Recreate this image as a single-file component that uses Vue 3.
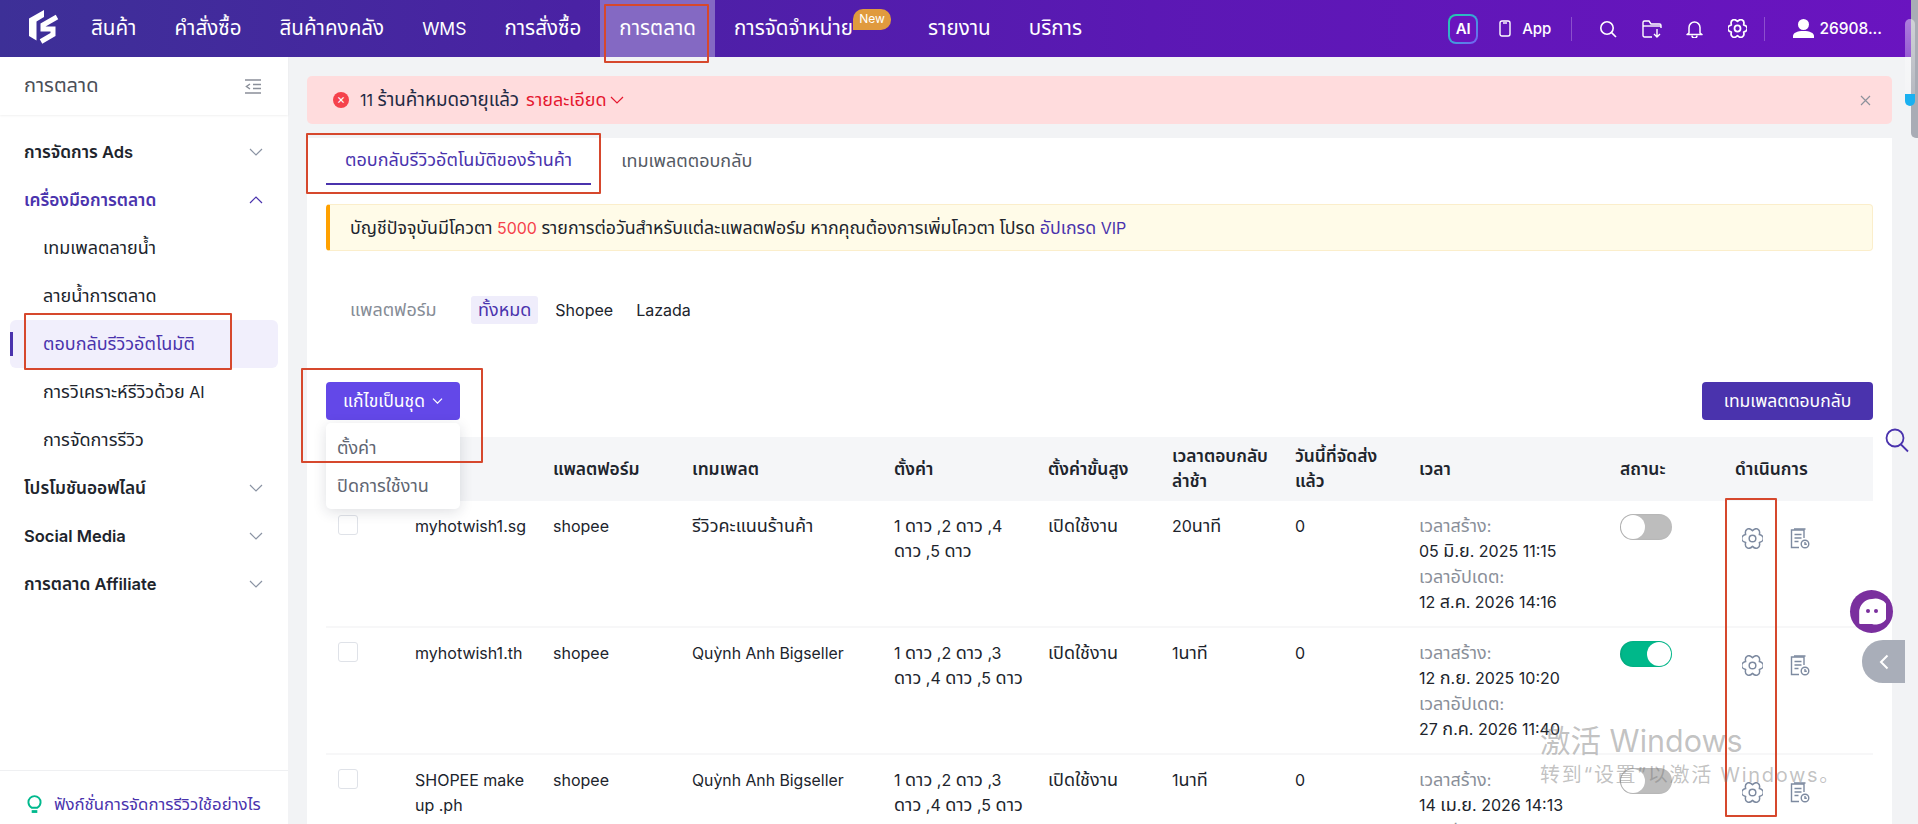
<script setup>
import { h } from 'vue'

// Thai glyphs in the reference run larger than the Latin ones at the same size,
// so each text is split into runs and the Thai runs get their own size.
const T = (props) => {
  const parts = String(props.t).split(/([\u0E00-\u0E7F]+)/).filter(Boolean)
  return h('span', parts.map((p) => (/[\u0E00-\u0E7F]/.test(p) ? h('span', { class: 'thai' }, p) : p)))
}
T.props = ['t']

// Six-lobed gear outline, centred in a 24x24 box.
const gearPath = (() => {
  const pt = (deg, r) => {
    const a = (deg * Math.PI) / 180
    return `${(12 + r * Math.cos(a)).toFixed(2)} ${(12 + r * Math.sin(a)).toFixed(2)}`
  }
  let d = `M${pt(-30, 9)}`
  for (let i = 0; i < 6; i++) {
    const lobe = i * 60
    d += ` Q${pt(lobe - 14, 13)} ${pt(lobe, 12.2)} Q${pt(lobe + 14, 13)} ${pt(lobe + 30, 9)}`
  }
  return d + 'Z'
})()

const navItems = ['สินค้า','คำสั่งซื้อ','สินค้าคงคลัง','WMS','การสั่งซื้อ','การตลาด','การจัดจำหน่าย','รายงาน','บริการ']
const subMenu = ['เทมเพลตลายน้ำ','ลายน้ำการตลาด','ตอบกลับรีวิวอัตโนมัติ','การวิเคราะห์รีวิวด้วย AI','การจัดการรีวิว']
const lowerMenu = ['โปรโมชันออฟไลน์','Social Media','การตลาด Affiliate']
const rows = [
  { acc:'myhotwish1.sg', tpl:'รีวิวคะแนนร้านค้า', set:'1 ดาว ,2 ดาว ,4 ดาว ,5 ดาว', delay:'20นาที', c:'05 มิ.ย. 2025 11:15', u:'12 ส.ค. 2026 14:16', on:false },
  { acc:'myhotwish1.th', tpl:'Quỳnh Anh Bigseller', set:'1 ดาว ,2 ดาว ,3 ดาว ,4 ดาว ,5 ดาว', delay:'1นาที', c:'12 ก.ย. 2025 10:20', u:'27 ก.ค. 2026 11:40', on:true },
  { acc:'SHOPEE make up .ph', tpl:'Quỳnh Anh Bigseller', set:'1 ดาว ,2 ดาว ,3 ดาว ,4 ดาว ,5 ดาว', delay:'1นาที', c:'14 เม.ย. 2026 14:13', u:'27 ก.ค. 2026 11:40', on:false },
]
</script>

<template>
  <div class="app">
    <header class="top">
      <svg class="logo" width="32" height="36" viewBox="0 0 32 36" fill="none" stroke="#fff" stroke-width="5">
        <path d="M16 1 L1 9.500 V27 L8.500 31.500 V12.500 L16 8 Z" fill="#fff" stroke="none"/>
        <path d="M29 8 L15 16 V20 L25 20 V25.500 L13 32.500"/>
      </svg>
      <nav class="nav">
        <a v-for="n in navItems" :key="n" class="nav-item" :class="{ active: n === 'การตลาด', dist: n === 'การจัดจำหน่าย' }">
          <T :t="n"/><span v-if="n === 'การจัดจำหน่าย'" class="new">New</span>
        </a>
      </nav>
      <div class="tools">
        <span class="ai">AI</span>
        <svg class="t-app" width="12" height="17" viewBox="0 0 12 17" fill="none" stroke="#fff" stroke-width="1.400"><rect x="1" y="1" width="10" height="15" rx="2"/><path d="M4 3h4"/></svg>
        <span class="app-label">App</span>
        <i class="sep"></i>
        <svg class="t-search" width="18" height="18" viewBox="0 0 18 18" fill="none" stroke="#fff" stroke-width="1.600"><circle cx="8" cy="8" r="6.200"/><path d="M12.600 12.600 17 17"/></svg>
        <svg class="t-folder" width="20" height="18" viewBox="0 0 20 18" fill="none" stroke="#fff" stroke-width="1.400"><path d="M10 17H2.500A1.500 1.500 0 0 1 1 15.500V2.500A1.500 1.500 0 0 1 2.500 1H7l2 3h8.500A1.500 1.500 0 0 1 19 5.500V8"/><path d="M1 6h18"/><path d="M15 9v8M12 14l3 3 3-3"/></svg>
        <svg class="t-bell" width="17" height="18" viewBox="0 0 17 18" fill="none" stroke="#fff" stroke-width="1.500"><path d="M3 13V7.500a5.500 5.500 0 0 1 11 0V13l2 1.500H1Z" stroke-linejoin="round"/><path d="M6 15.500a2.500 2.500 0 0 0 5 0"/></svg>
        <svg class="t-gear" width="19" height="19" viewBox="0 0 24 24" fill="none" stroke="#fff" stroke-width="2.200" stroke-linejoin="round"><path :d="gearPath"/><circle cx="12" cy="12" r="3.800"/></svg>
        <i class="sep sep2"></i>
        <svg class="t-user" width="21" height="19" viewBox="0 0 21 19" fill="#fff"><circle cx="10.500" cy="5.500" r="5.500"/><path d="M0 19v-2c0-3 4-5 10.500-5S21 14 21 17v2Z"/></svg>
        <span class="uname">26908...</span>
      </div>
    </header>

    <div class="body">
      <aside class="side">
        <div class="side-title">
          <T t="การตลาด"/>
          <svg width="18" height="15" viewBox="0 0 18 15" fill="none" stroke="#8a8f99" stroke-width="1.500"><path d="M1 1h16M9 5.500h8M9 9.500h8M1 14h16"/><path d="M6 5 2.500 7.500 6 10" /></svg>
        </div>
        <div class="menu">
          <div class="group"><b><T t="การจัดการ Ads"/></b><svg class="chev" viewBox="0 0 14 8"><path d="M1 1l6 6 6-6"/></svg></div>
          <div class="group open"><b><T t="เครื่องมือการตลาด"/></b><svg class="chev" viewBox="0 0 14 8"><path d="M1 7l6-6 6 6"/></svg></div>
          <div v-for="s in subMenu" :key="s" class="sub" :class="{ current: s === 'ตอบกลับรีวิวอัตโนมัติ' }"><T :t="s"/></div>
          <div v-for="l in lowerMenu" :key="l" class="group"><b><T :t="l"/></b><svg class="chev" viewBox="0 0 14 8"><path d="M1 1l6 6 6-6"/></svg></div>
        </div>
        <div class="side-foot">
          <svg width="15" height="19" viewBox="0 0 16 20" fill="none" stroke="#00b98d" stroke-width="2"><path d="M5 13.500C3 12 1.500 10.200 1.500 7.500a6.500 6.500 0 0 1 13 0c0 2.700-1.500 4.500-3.500 6Z"/><path d="M5 17.500h6" stroke-width="3"/></svg>
          <T t="ฟังก์ชั่นการจัดการรีวิวใช้อย่างไร"/>
        </div>
      </aside>

      <main class="main">
        <div class="alert">
          <span class="x-dot">×</span>
          <span class="al-text"><T t="11 ร้านค้าหมดอายุแล้ว"/></span>
          <span class="al-link"><T t="รายละเอียด"/></span>
          <svg class="al-chev" width="14" height="8" viewBox="0 0 14 8" fill="none" stroke="#e5172f" stroke-width="1.200"><path d="M1 1l6 6 6-6"/></svg>
          <svg class="al-close" width="11" height="11" viewBox="0 0 11 11" stroke="#8d929c" stroke-width="1.200"><path d="M1 1l9 9M10 1l-9 9"/></svg>
        </div>

        <section class="card">
          <div class="tabs">
            <div class="tab on"><T t="ตอบกลับรีวิวอัตโนมัติของร้านค้า"/></div>
            <div class="tab"><T t="เทมเพลตตอบกลับ"/></div>
          </div>
          <div class="notice">
            <span><T t="บัญชีปัจจุบันมีโควตา "/><em>5000</em><T t=" รายการต่อวันสำหรับแต่ละแพลตฟอร์ม หากคุณต้องการเพิ่มโควตา โปรด "/><a><T t="อัปเกรด VIP"/></a></span>
          </div>
          <div class="filter">
            <span class="f-label"><T t="แพลตฟอร์ม"/></span>
            <span class="chip on"><T t="ทั้งหมด"/></span>
            <span class="chip">Shopee</span>
            <span class="chip">Lazada</span>
          </div>
          <div class="actions">
            <div class="batch">
              <button class="btn light"><T t="แก้ไขเป็นชุด"/>
                <svg width="11" height="6" viewBox="0 0 11 6" fill="none" stroke="#fff" stroke-width="1.200"><path d="M1 .7l4.500 4.500L10 .7"/></svg>
              </button>
              <div class="drop"><div><T t="ตั้งค่า"/></div><div><T t="ปิดการใช้งาน"/></div></div>
            </div>
            <button class="btn dark"><T t="เทมเพลตตอบกลับ"/></button>
          </div>
          <div class="table">
            <div class="tr th">
              <div></div><div></div>
              <div><T t="แพลตฟอร์ม"/></div><div><T t="เทมเพลต"/></div><div><T t="ตั้งค่า"/></div><div><T t="ตั้งค่าขั้นสูง"/></div>
              <div><T t="เวลาตอบกลับ"/><br><T t="ล่าช้า"/></div><div><T t="วันนี้ที่จัดส่ง"/><br><T t="แล้ว"/></div><div><T t="เวลา"/></div><div><T t="สถานะ"/></div><div><T t="ดำเนินการ"/></div>
            </div>
            <div v-for="r in rows" :key="r.acc" class="tr td">
              <div><span class="check"></span></div>
              <div>{{ r.acc }}</div>
              <div>shopee</div>
              <div class="tpl"><T :t="r.tpl"/></div>
              <div><T :t="r.set"/></div>
              <div><T t="เปิดใช้งาน"/></div>
              <div><T :t="r.delay"/></div>
              <div>0</div>
              <div class="time">
                <span class="mut"><T t="เวลาสร้าง:"/></span><span><T :t="r.c"/></span>
                <span class="mut"><T t="เวลาอัปเดต:"/></span><span><T :t="r.u"/></span>
              </div>
              <div><span class="sw" :class="{ on: r.on }"><i></i></span></div>
              <div class="ops">
                <svg width="21" height="21" viewBox="0 0 24 24" fill="none" stroke="#7d8aa0" stroke-width="1.700" stroke-linejoin="round"><path :d="gearPath"/><circle cx="12" cy="12" r="3.800"/></svg>
                <svg width="20" height="21" viewBox="0 0 20 21" fill="none" stroke="#7d8aa0" stroke-width="1.400"><path d="M9 19.500H1.500V2h12.500v8"/><path d="M4 1h11.500M4.500 6.500h7M4.500 10h7M4.500 13.500h4"/><circle cx="15" cy="16" r="3.800"/><path d="M15 14v2.200h1.800"/></svg>
              </div>
            </div>
          </div>
        </section>
      </main>
    </div>

    <!-- floating widgets -->
    <div class="scroll-edge"></div>
    <div class="scroll-pill"><i></i></div>
    <svg class="float-search" width="24" height="25" viewBox="0 0 24 25" fill="none" stroke="#4a33ad" stroke-width="1.800"><circle cx="10" cy="10" r="8.500"/><path d="M16 16.500l7 7"/></svg>
    <div class="chat"><svg width="28" height="27" viewBox="0 0 28 27"><path d="M14 1a13 13 0 1 1 0 25H2.500c-.8 0-1.300-.5-1.300-1.300V14A13 13 0 0 1 14 1Z" fill="#fff"/><circle cx="10" cy="13" r="2" fill="#7a2f9e"/><circle cx="18" cy="13" r="2" fill="#7a2f9e"/></svg></div>
    <div class="pull"><svg width="10" height="16" viewBox="0 0 10 16" fill="none" stroke="#fff" stroke-width="2"><path d="M8.500 1.500 2 8l6.500 6.500"/></svg></div>

    <div class="wm">
      <div class="wm1">激活 Windows</div>
      <div class="wm2">转到“设置”以激活 Windows。</div>
    </div>

    <!-- red annotation boxes drawn on the screenshot -->
    <i class="mark m-nav"></i>
    <i class="mark m-tab"></i>
    <i class="mark m-side"></i>
    <i class="mark m-batch"></i>
    <i class="mark m-gear"></i>
  </div>
</template>

<style>
html, body { margin: 0; overflow: hidden; }
.thai { font-size: var(--th, 18px); line-height: 0; }
</style>

<style scoped>
* { box-sizing: border-box; }
.app {
  position: relative; width: 1918px; height: 824px; overflow: hidden; background: #f2f3f5;
  font-family: Inter, "Noto Sans", "Noto Sans Thai", "DejaVu Sans", "Noto Sans CJK SC", sans-serif;
  font-size: 16px; line-height: 25px; color: #20242c; --th: 18px;
}
.top {
  height: 57px; display: flex; align-items: center; padding-left: 28px; color: #fff;
  background: linear-gradient(90deg, #3d3097 0%, #4a22a4 30%, #5b18b4 60%, #6a14c0 100%);
}
.logo { flex: none; margin-top: -3px; }
.nav { display: flex; height: 57px; margin-left: 12px; font-size: 17.500px; --th: 20.600px; }
.nav-item { position: relative; display: flex; align-items: center; padding: 0 19px; white-space: nowrap; }
.nav-item.active { background: #8469c3; }
.nav-item.dist { margin-right: 37px; }
.new {
  position: absolute; left: 100%; margin-left: -19px; top: 9px; height: 21px; width: 38px; border-radius: 10px 10px 10px 0;
  background: #e09a3e; font-size: 12px; text-align: center; line-height: 20px;
}
.tools { display: flex; align-items: center; margin-left: auto; padding-right: 36px; }
.ai {
  width: 30px; height: 30px; border-radius: 8px; border: 2.500px solid transparent; display: flex; align-items: center; justify-content: center;
  font-size: 15px; font-weight: 600;
  background: linear-gradient(#6a14be, #6a14be) padding-box, linear-gradient(135deg, #1fd0a6 0%, #3aa4d8 50%, #7a5cf5 100%) border-box;
}
.t-app { margin-left: 21px; }
.app-label { margin-left: 11px; font-size: 15px; font-weight: 500; }
.sep { width: 1px; height: 24px; background: rgba(255,255,255,.25); margin-left: 20px; }
.t-search { margin-left: 27px; }
.t-folder { margin-left: 25px; }
.t-bell { margin-left: 24px; }
.t-gear { margin-left: 25px; }
.sep2 { margin-left: 17px; }
.t-user { margin-left: 28px; }
.uname { margin-left: 5px; font-size: 15.500px; font-weight: 500; }

.body { display: flex; height: 767px; }
.side { width: 288px; flex: none; display: flex; flex-direction: column; background: #fff; }
.side-title {
  height: 58px; flex: none; display: flex; align-items: center; justify-content: space-between; padding: 0 26px 0 24px;
  color: #4b4f58; box-shadow: 0 1px 2px rgba(0,0,0,.06); --th: 20px;
}
.menu { flex: 1; padding-top: 13px; }
.group { height: 48px; display: flex; align-items: center; justify-content: space-between; padding: 0 25px 0 24px; font-size: 16.500px; --th: 17.300px; }
.group b { font-weight: 600; }
.group.open { color: #4a33ad; }
.chev { width: 14px; height: 8px; fill: none; stroke: #8a93a3; stroke-width: 1.200; }
.group.open .chev { stroke: #4a33ad; }
.sub { height: 48px; display: flex; align-items: center; margin: 0 10px; padding-left: 33px; border-radius: 6px; position: relative; }
.sub.current { background: #f1effc; color: #4a33ad; }
.sub.current::before { content: ''; position: absolute; left: 0; top: 12px; width: 3px; height: 24px; background: #4a33ad; }
.side-foot { height: 54px; flex: none; border-top: 1px solid #eff0f2; display: flex; align-items: center; gap: 12px; padding: 14px 0 0 27px; color: #4a33ad; --th: 16.800px; }

.main { flex: 1; min-width: 0; padding: 19px 26px 0 19px; }
.alert { height: 48px; background: #ffdcdd; border-radius: 5px; display: flex; align-items: center; padding: 0 21px 0 26px; }
.x-dot { width: 16px; height: 16px; border-radius: 50%; background: #f5424b; color: #fff; font-size: 13px; line-height: 15px; text-align: center; }
.al-text { margin-left: 11px; color: #1f2a44; --th: 18.800px; }
.al-link { margin-left: 7px; color: #e5172f; }
.al-chev { margin-left: 3px; }
.al-close { margin-left: auto; }

.card { margin-top: 14px; background: #fff; padding: 0 19px; height: 700px; }
.tabs { display: flex; height: 66px; padding-bottom: 19px; }
.tab { height: 47px; padding: 0 19px; display: flex; align-items: center; color: #555a64; margin-right: 11px; white-space: nowrap; }
.tab.on { color: #4a33ad; border-bottom: 2px solid #4a33ad; }
.notice {
  height: 47px; display: flex; align-items: center; background: #fffbe8; border: 1px solid #fbeecb; border-left: 4px solid #ffa100;
  border-radius: 4px; padding: 2px 0 0 20px; white-space: pre; --th: 17.800px;
}
.notice em { font-style: normal; color: #f5424b; }
.notice a { color: #4a33ad; }
.filter { display: flex; align-items: center; margin-top: 46px; height: 26px; padding-left: 24px; }
.f-label { color: #868c96; width: 121px; }
.chip { height: 28px; line-height: 28px; padding: 0 6px; margin-right: 11px; border-radius: 3px; }
.chip.on { background: #efedfb; color: #4a33ad; padding: 0 7px; margin-right: 11px; }
.actions { display: flex; justify-content: space-between; margin-top: 59px; height: 55px; }
.batch { position: relative; }
.btn { height: 38px; border: 0; border-radius: 4px; color: #fff; font: inherit; display: flex; align-items: center; justify-content: center; gap: 7px; --th: 17.500px; }
.btn.light { width: 134px; background: #6348e8; }
.btn.dark { width: 171px; background: #4a33ad; }
.drop {
  position: absolute; z-index: 3; left: 0; top: 41px; width: 134px; height: 86px; background: #fff; border-radius: 5px;
  box-shadow: 0 3px 14px rgba(30,35,60,.14); padding-top: 6px; color: #5f6672;
}
.drop div { height: 38px; line-height: 38px; padding-left: 11px; }
.tr {
  display: grid; grid-template-columns: 77px 138px 139px 202px 154px 124px 123px 124px 201px 115px 1fr;
  padding-left: 12px;
}
.tr > div { padding-right: 20px; }
.th { height: 64px; background: #f5f6f8; align-items: center; font-weight: 600; line-height: 25px; --th: 17.400px; }
.th > div { white-space: nowrap; padding-right: 0; }
.td { height: 127px; padding-top: 13px; line-height: 25.300px; border-bottom: 2px solid #f7f7f8; }
.tpl { font-size: 15.800px; }
.check { display: block; width: 20px; height: 20px; margin-top: 1px; border: 1px solid #dfe2e8; border-radius: 3px; }
.time { display: flex; flex-direction: column; }
.time > span { white-space: nowrap; }
.mut { color: #8a8f99; }
.sw { display: block; position: relative; width: 52px; height: 26px; border-radius: 13px; background: #bdbdbd; box-shadow: inset 1px 0 2px rgba(0,0,0,.12); }
.sw i { position: absolute; left: 1px; top: 1px; width: 24px; height: 24px; border-radius: 50%; background: #fff; }
.sw.on { background: #00b88a; }
.sw.on i { left: 27px; }
.ops { display: flex; gap: 27px; padding-top: 14px; padding-right: 0; margin-left: 7px; }

.scroll-edge { position: absolute; left: 1911px; top: 0; width: 7px; height: 138px; background: #a9acb5; border-bottom-left-radius: 5px; }
.scroll-pill {
  position: absolute; left: 1905px; top: 19px; width: 10px; height: 87px; border-radius: 5px; overflow: hidden;
  background: linear-gradient(180deg, rgba(255,255,255,.45), rgba(255,255,255,.12));
  display: flex; align-items: flex-end;
}
.scroll-pill i { display: block; width: 100%; height: 12px; background: #1ab0f0; }
.float-search { position: absolute; left: 1885px; top: 428px; }
.chat { position: absolute; left: 1850px; top: 590px; width: 43px; height: 43px; border-radius: 50%; background: #7a2f9e; display: flex; align-items: center; justify-content: center; }
.pull { position: absolute; left: 1862px; top: 640px; width: 43px; height: 43px; border-radius: 21px 0 0 21px; background: #a9aeb9; display: flex; align-items: center; justify-content: center; }

.wm { position: absolute; z-index: 6; left: 1540px; top: 722px; color: rgba(120,120,120,.45); pointer-events: none; }
.wm1 { font-size: 30.500px; line-height: 38px; }
.wm2 { font-size: 20px; line-height: 30px; letter-spacing: 1.700px; }

.mark { position: absolute; z-index: 5; border: 2.500px solid #d6482d; border-radius: 1px; pointer-events: none; }
.m-nav { left: 604px; top: 4px; width: 105px; height: 59px; }
.m-tab { left: 306px; top: 133px; width: 295px; height: 61px; }
.m-side { left: 24px; top: 313px; width: 208px; height: 57px; }
.m-batch { left: 301px; top: 368px; width: 182px; height: 95px; }
.m-gear { left: 1725px; top: 498px; width: 52px; height: 319px; }
</style>
